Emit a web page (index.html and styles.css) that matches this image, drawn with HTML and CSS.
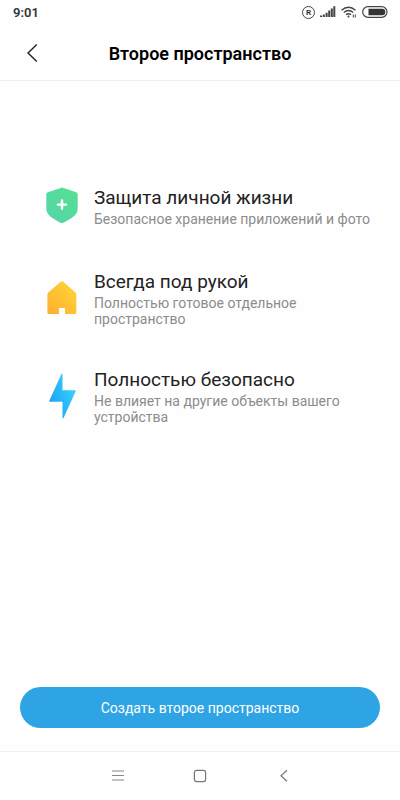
FILE: index.html
```html
<!DOCTYPE html>
<html lang="ru">
<head>
<meta charset="utf-8">
<meta name="viewport" content="width=device-width, initial-scale=1">
<title>Второе пространство</title>
<link rel="stylesheet" href="styles.css">
</head>
<body>
<div class="status">
  <span class="clock">9:01</span>
  <div class="indicators">
    <span class="registered">R</span>
    <svg width="16" height="12" viewBox="0 0 16 12" fill="#444" aria-hidden="true">
      <path d="M0 9.5h2V11H0zM2.8 8.5h2V11h-2zM5.6 6.8h2V11h-2zM8.2 4.6h2V11h-2zM10.8 2.6h2V11h-2zM13.3.3h2V11h-2z"/>
    </svg>
    <svg width="16" height="12" viewBox="0 0 16 12" fill="none" stroke="#444" stroke-width="1.4" aria-hidden="true">
      <path d="M.5 4.2Q7.500-1.800 14.500 4.200M2.800 6.500Q7.500 2.600 12.200 6.500M5 8.700Q7.500 6.700 10 8.700"/>
      <circle cx="7.500" cy="10.500" r="1" fill="#444" stroke="none"/>
      <path d="M12.300 11.500V8.500M14.300 8.500v3" stroke-width="1"/>
    </svg>
    <svg class="battery" width="26" height="12" viewBox="0 0 26 12" aria-hidden="true">
      <rect x=".7" y=".7" width="24.300" height="10.600" rx="5.300" fill="none" stroke="#444" stroke-width="1.200"/>
      <path d="M6.500 2.700h13.500a3.300 3.300 0 0 1 0 6.600H6.500z" fill="#333"/>
    </svg>
  </div>
</div>
<header class="header">
  <button class="back" type="button" aria-label="Назад">
    <svg width="12" height="20" viewBox="0 0 12 20" fill="none" stroke="#222" stroke-width="1.400"><path d="M10.800 1.500 2 10l8.800 8.500"/></svg>
  </button>
  <h1>Второе пространство</h1>
</header>
<main class="content">
  <ul class="features">
    <li>
      <svg class="icon" viewBox="0 0 44 44" aria-hidden="true">
        <defs><linearGradient id="green" x1="1" y1="0" x2="0" y2="1"><stop offset="0" stop-color="#59df91"/><stop offset="1" stop-color="#54d5ab"/></linearGradient></defs>
        <path fill="url(#green)" d="M20.600 3.900Q22 3.200 23.400 3.900L36.200 8.200Q37.700 8.800 37.700 10.300V25C37.700 31 30 35.500 23.300 38.800Q22 39.400 20.700 38.800C14 35.500 6.300 31 6.300 25V10.300Q6.300 8.800 7.800 8.200Z"/>
        <path d="M22 16.500v8.200M17.900 20.600h8.200" stroke="#fff" stroke-width="2.400" stroke-linecap="round"/>
      </svg>
      <div><h2>Защита личной жизни</h2><p>Безопасное хранение приложений и фото</p></div>
    </li>
    <li>
      <svg class="icon" viewBox="0 0 44 44" aria-hidden="true">
        <defs><linearGradient id="yellow" x1="1" y1="0" x2="0" y2="1"><stop offset="0" stop-color="#ffd637"/><stop offset="1" stop-color="#fdaf30"/></linearGradient></defs>
        <path fill="url(#yellow)" d="M20.800 5.800Q22 4.900 23.200 5.800L35.200 16.200Q36.300 17.200 36.300 18.600V36.500Q36.300 38 34.800 38H25V33Q25 32 24 32H20Q19 32 19 33V38H8.900Q7.400 38 7.400 36.500V18.600Q7.400 17.200 8.500 16.200Z"/>
      </svg>
      <div><h2>Всегда под рукой</h2><p>Полностью готовое отдельное пространство</p></div>
    </li>
    <li>
      <svg class="icon" viewBox="0 0 44 44" aria-hidden="true">
        <defs><linearGradient id="blue" x1="1" y1=".2" x2="0" y2=".8"><stop offset="0" stop-color="#38d8ff"/><stop offset="1" stop-color="#1c9eee"/></linearGradient></defs>
        <path fill="url(#blue)" d="M21.600-.3Q22.500-1 22.500.4V16.200H35Q36.200 16.400 35.600 17.500L23.800 43.500Q22.500 45.500 22.500 43V27.700H10Q8.800 27.500 9.400 26.400Z"/>
      </svg>
      <div><h2>Полностью безопасно</h2><p>Не влияет на другие объекты вашего устройства</p></div>
    </li>
  </ul>
  <button class="create" type="button">Создать второе пространство</button>
</main>
<nav class="nav" aria-label="Системная навигация">
  <button type="button" aria-label="Меню"><svg width="14" height="14" viewBox="0 0 14 14" fill="none" stroke="#888" stroke-width="1.200"><path d="M1 2h12M1 6.500h12M1 11h12"/></svg></button>
  <button type="button" aria-label="Домой"><svg width="14" height="14" viewBox="0 0 14 14" fill="none" stroke="#777" stroke-width="1.200"><rect x="1.400" y="1.400" width="11.200" height="11.200" rx="2"/></svg></button>
  <button type="button" aria-label="Назад"><svg width="14" height="14" viewBox="0 0 14 14" fill="none" stroke="#777" stroke-width="1.200"><path d="M11 1.200 5 6.700l6 5.500"/></svg></button>
</nav>
</body>
</html>
```
FILE: styles.css
```css
* { box-sizing: border-box; }
body {
  margin: 0;
  min-height: 100vh;
  display: flex;
  flex-direction: column;
  background: #fefefe;
  color: #222;
  font-family: Roboto, "Noto Sans", sans-serif;
}
button {
  border: 0;
  padding: 0;
  background: none;
  font: inherit;
  color: inherit;
}
svg { display: block; overflow: visible; }
h1, h2, p { margin: 0; font-weight: 400; }

.status {
  height: 24px;
  padding: 0 12px 0 13px;
  display: flex;
  align-items: center;
  justify-content: space-between;
}
.clock { font-size: 13px; font-weight: 600; color: #333; }
.indicators { display: flex; align-items: center; gap: 5px; }
.registered {
  width: 13px;
  height: 13px;
  border: 1px solid #444;
  border-radius: 50%;
  font-size: 8px;
  font-weight: 700;
  line-height: 11px;
  text-align: center;
  color: #333;
}

.header {
  height: 57px;
  padding: 2px 20px 0;
  border-bottom: 1px solid #eee;
  display: grid;
  grid-template-columns: 24px 1fr 24px;
  align-items: center;
}
.back { height: 40px; display: grid; place-items: center; }
.header h1 {
  font-size: 18px;
  font-weight: 600;
  text-align: center;
  color: #000;
}

.content {
  flex: 1;
  padding: 102px 20px 23px;
  display: flex;
  flex-direction: column;
  justify-content: space-between;
}
.features {
  margin: 0;
  padding: 0 0 0 20px;
  list-style: none;
  display: grid;
  gap: 40px;
}
.features li {
  min-height: 46px;
  display: flex;
  align-items: center;
  gap: 10px;
}
.features .icon { flex: none; width: 44px; height: 44px; }
.features h2 { font-size: 19px; line-height: 26px; }
.features p { font-size: 14px; line-height: 16px; color: #8c8c8c; }

.create {
  height: 41px;
  border-radius: 21px;
  background: #2ea4e5;
  color: #fff;
  font-size: 14px;
}

.nav {
  height: 49px;
  padding: 0 76px 0 77px;
  border-top: 1px solid #f0f0f0;
  display: grid;
  grid-template-columns: repeat(3, 1fr);
}
.nav button { display: grid; place-items: center; }
```
